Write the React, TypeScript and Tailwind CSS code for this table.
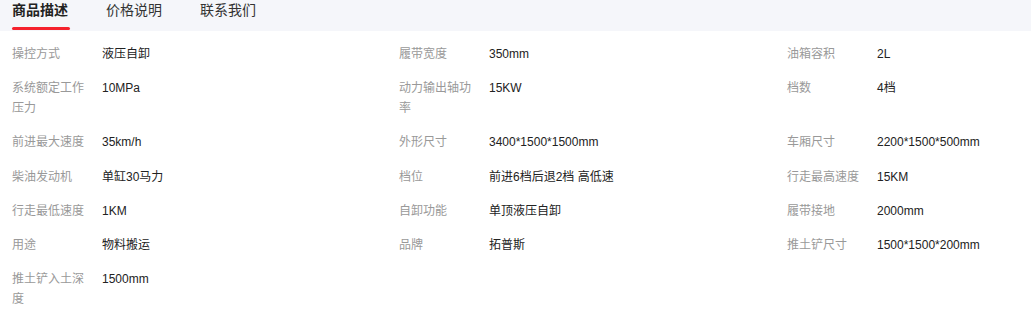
import React from "react";

const specs: [string, string][] = [
  ["操控方式", "液压自卸"],
  ["履带宽度", "350mm"],
  ["油箱容积", "2L"],
  ["系统额定工作压力", "10MPa"],
  ["动力输出轴功率", "15KW"],
  ["档数", "4档"],
  ["前进最大速度", "35km/h"],
  ["外形尺寸", "3400*1500*1500mm"],
  ["车厢尺寸", "2200*1500*500mm"],
  ["柴油发动机", "单缸30马力"],
  ["档位", "前进6档后退2档 高低速"],
  ["行走最高速度", "15KM"],
  ["行走最低速度", "1KM"],
  ["自卸功能", "单顶液压自卸"],
  ["履带接地", "2000mm"],
  ["用途", "物料搬运"],
  ["品牌", "拓普斯"],
  ["推土铲尺寸", "1500*1500*200mm"],
  ["推土铲入土深度", "1500mm"],
];

const tabs = ["商品描述", "价格说明", "联系我们"];

const App = () => {
  return (
    <div
      className="w-[1031px] h-[332px] bg-white overflow-hidden"
      style={{ fontFamily: '"Liberation Sans", "Noto Sans CJK SC", sans-serif' }}
    >
      {/* tab bar */}
      <div className="h-[31px] bg-[#f5f6fa] flex pl-[12px] gap-[38px]">
        {tabs.map((t, i) => (
          <div key={t} className="relative h-full">
            <span
              className={
                i === 0
                  ? "block text-[14px] leading-[20px] font-bold text-[#222]"
                  : "block text-[14px] leading-[20px] text-[#333]"
              }
            >
              {t}
            </span>
            {i === 0 && (
              <div className="absolute left-0 right-[-2px] bottom-[1px] h-[3px] rounded-full bg-[#f5222d]" />
            )}
          </div>
        ))}
      </div>

      {/* spec grid */}
      <div className="grid grid-cols-[387px_388px_1fr] pl-[12px] pt-[6px]">
        {specs.map(([label, value]) => (
          <div key={label} className="flex py-[7.1px] text-[12px] leading-[20px]">
            <div className="w-[80px] mr-[10px] shrink-0 text-[#999]">{label}</div>
            <div className="text-[#222]">{value}</div>
          </div>
        ))}
      </div>
    </div>
  );
};

export default App;
